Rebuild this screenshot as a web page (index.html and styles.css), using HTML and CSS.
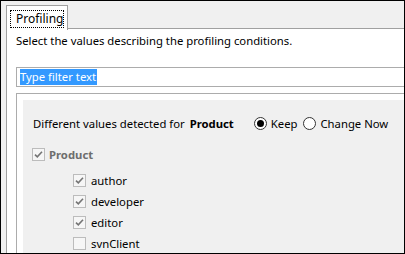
FILE: index.html
```html
<!DOCTYPE html>
<html lang="en">
<head>
  <meta charset="UTF-8">
  <title>Profiling</title>
  <link rel="stylesheet" href="styles.css">
</head>
<body>
  <div class="frame">
    <div class="tabs">
      <div class="tab"><span class="tab-label">Profiling</span></div>
      <div class="tab-fill"></div>
    </div>

    <div class="panel">
      <p class="intro">Select the values describing the profiling conditions.</p>
      <div class="filter"><span class="filter-sel">Type filter text</span></div>

      <div class="box">
        <div class="box-inner">
          <div class="detect-row">
            <span class="detect-text">Different values detected for <b>Product</b></span>
            <label class="radio first"><span class="radio-dot on"></span>Keep</label>
            <label class="radio"><span class="radio-dot"></span>Change Now</label>
          </div>

          <div class="check parent">
            <span class="box-mark checked"><svg viewBox="0 0 11 11" width="11" height="11"><path d="M2 5.6 L4.3 7.9 L9 2.8" /></svg></span>
            <span class="check-label">Product</span>
          </div>

          <div class="children">
            <div class="check">
              <span class="box-mark checked"><svg viewBox="0 0 11 11" width="11" height="11"><path d="M2 5.6 L4.3 7.9 L9 2.8" /></svg></span>
              <span class="check-label">author</span>
            </div>
            <div class="check">
              <span class="box-mark checked"><svg viewBox="0 0 11 11" width="11" height="11"><path d="M2 5.6 L4.3 7.9 L9 2.8" /></svg></span>
              <span class="check-label">developer</span>
            </div>
            <div class="check">
              <span class="box-mark checked"><svg viewBox="0 0 11 11" width="11" height="11"><path d="M2 5.6 L4.3 7.9 L9 2.8" /></svg></span>
              <span class="check-label">editor</span>
            </div>
            <div class="check">
              <span class="box-mark"></span>
              <span class="check-label">svnClient</span>
            </div>
          </div>
        </div>
      </div>
    </div>
  </div>
</body>
</html>
```

FILE: styles.css
```css
* {
  box-sizing: border-box;
}

body {
  margin: 0;
  font-family: 'Noto Sans', sans-serif;
  font-size: 11.3px;
  color: #000;
}

.frame {
  width: 405px;
  height: 254px;
  border: 1px solid #000;
  background: #f0f0f0;
  overflow: hidden;
}

.tabs {
  display: flex;
  align-items: flex-end;
  height: 28px;
  padding-left: 5px;
}

.tab {
  width: 62px;
  height: 25px;
  margin-bottom: -1px;
  background: #fff;
  border: 1px solid #a0a0a0;
  border-bottom: none;
  padding: 4px 0 0 3px;
  position: relative;
  z-index: 1;
}

.tab-label {
  display: block;
  width: 54px;
  height: 18px;
  line-height: 16px;
  padding-left: 5px;
  border: 1px dotted #000;
  font-size: 12px;
}

.tab-fill {
  flex: 1;
  border-bottom: 1px solid #a0a0a0;
}

.panel {
  margin-left: 5px;
  margin-right: -30px;
  height: 240px;
  background: #fff;
  border-left: 1px solid #a0a0a0;
  padding: 4px 0 0 9px;
}

.intro {
  margin: 0;
  line-height: 16px;
}

.filter {
  margin-top: 18px;
  height: 20px;
  border: 1px solid #acacac;
  padding: 1px 0 0 3px;
}

.filter-sel {
  display: inline-block;
  height: 16px;
  line-height: 16px;
  padding-right: 1px;
  background: #3399ff;
  color: #fff;
}

.box {
  margin-top: 6px;
  border: 1px solid #acacac;
  padding: 6px 0 0 6px;
  height: 200px;
}

.box-inner {
  background: #f0f0f0;
  height: 100%;
  padding: 17px 0 0 10px;
}

.detect-row {
  display: flex;
  align-items: center;
  height: 13px;
  line-height: 16px;
}

.detect-row b {
  margin-left: 2px;
}

.radio {
  display: flex;
  align-items: center;
  margin-left: 6px;
}

.radio.first {
  margin-left: 20px;
}

.radio-dot {
  width: 13px;
  height: 13px;
  border: 1px solid #333;
  border-radius: 50%;
  background: #fff;
  margin-right: 4px;
  display: flex;
  align-items: center;
  justify-content: center;
}

.radio-dot.on::after {
  content: "";
  width: 7px;
  height: 7px;
  border-radius: 50%;
  background: #000;
}

.check {
  display: flex;
  align-items: center;
  height: 13px;
  line-height: 16px;
}

.check.parent {
  margin-top: 18px;
  margin-left: -1px;
  color: #6d6d6d;
  font-weight: bold;
}

.check.parent .check-label {
  margin-left: 4px;
}

.children {
  margin-top: 13px;
  padding-left: 40px;
  display: flex;
  flex-direction: column;
  gap: 8px;
}

.box-mark {
  width: 13px;
  height: 13px;
  border: 1px solid #bcbcbc;
  background: #f6f6f6;
  display: flex;
  align-items: center;
  justify-content: center;
}

.box-mark path {
  fill: none;
  stroke: #757575;
  stroke-width: 1.6;
}

.check-label {
  margin-left: 5px;
}
```
